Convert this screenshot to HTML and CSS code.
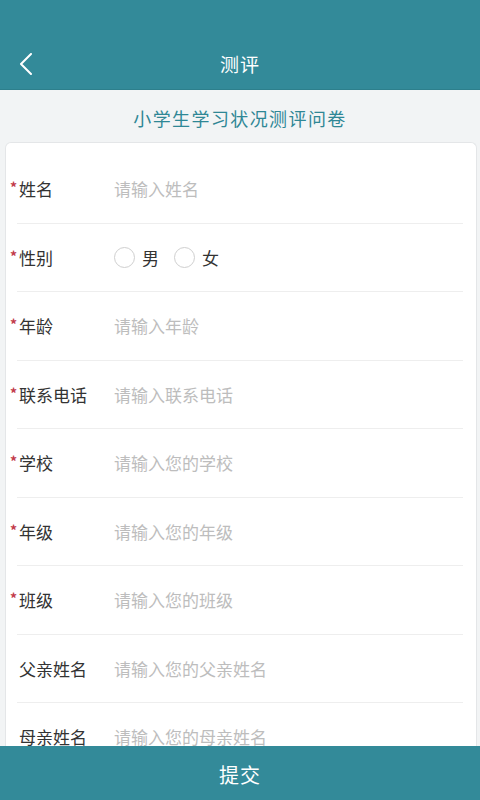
FILE: index.html
```html
<!DOCTYPE html>
<html lang="zh-CN">
<head>
<meta charset="utf-8">
<title>测评</title>
<link rel="stylesheet" href="styles.css">
</head>
<body>
<div class="app">
  <header class="header">
    <div class="bar">
      <span class="back">
        <svg width="14" height="22" viewBox="0 0 14 22"><path d="M12 1 L2 11 L12 21" fill="none" stroke="#fff" stroke-width="2" stroke-linecap="round" stroke-linejoin="round"/></svg>
      </span>
      <h1 class="title">测评</h1>
    </div>
  </header>
  <div class="subtitle">小学生学习状况测评问卷</div>
  <main class="main">
    <div class="card">
      <div class="row"><label class="label"><span class="star">*</span>姓名</label><input class="input" placeholder="请输入姓名"></div>
      <div class="row"><label class="label"><span class="star">*</span>性别</label>
        <div class="radios">
          <span class="radio"><span class="circle"></span>男</span>
          <span class="radio"><span class="circle"></span>女</span>
        </div>
      </div>
      <div class="row"><label class="label"><span class="star">*</span>年龄</label><input class="input" placeholder="请输入年龄"></div>
      <div class="row"><label class="label"><span class="star">*</span>联系电话</label><input class="input" placeholder="请输入联系电话"></div>
      <div class="row"><label class="label"><span class="star">*</span>学校</label><input class="input" placeholder="请输入您的学校"></div>
      <div class="row"><label class="label"><span class="star">*</span>年级</label><input class="input" placeholder="请输入您的年级"></div>
      <div class="row"><label class="label"><span class="star">*</span>班级</label><input class="input" placeholder="请输入您的班级"></div>
      <div class="row"><label class="label">父亲姓名</label><input class="input" placeholder="请输入您的父亲姓名"></div>
      <div class="row"><label class="label">母亲姓名</label><input class="input" placeholder="请输入您的母亲姓名"></div>
    </div>
  </main>
  <footer class="submit">提交</footer>
</div>
</body>
</html>
```
FILE: styles.css
```css
* { box-sizing: border-box; }
html, body { margin: 0; padding: 0; }
body {
  width: 480px;
  height: 800px;
  overflow: hidden;
  font-family: "Noto Sans CJK SC", "Noto Sans", sans-serif;
  background: #f2f4f5;
}
.app {
  display: flex;
  flex-direction: column;
  height: 800px;
}
.header {
  flex: none;
  height: 90px;
  padding-top: 37px;
  background: #338a99;
  border-bottom: 1px solid #2d7f8c;
}
.bar {
  height: 52px;
  display: flex;
  align-items: center;
  justify-content: center;
  position: relative;
}
.back {
  position: absolute;
  left: 19px;
  top: 16px;
  display: flex;
}
.title {
  margin: 0;
  font-size: 19px;
  font-weight: 400;
  color: #fff;
  letter-spacing: 1px;
}
.subtitle {
  flex: none;
  height: 52px;
  padding-top: 4px;
  display: flex;
  align-items: center;
  justify-content: center;
  font-size: 18px;
  letter-spacing: 1.4px;
  color: #2f8795;
}
.main {
  flex: 1;
  overflow: hidden;
  padding: 0 3px 0 5px;
}
.card {
  background: #fff;
  border: 1px solid #e4e6e8;
  border-bottom: none;
  border-radius: 6px 6px 0 0;
  padding-top: 12px;
}
.row {
  height: 68.5px;
  margin: 0 13px 0 11px;
  border-bottom: 1px solid #eeeeee;
  display: flex;
  align-items: center;
}
.label {
  flex: none;
  width: 97px;
  padding-left: 2px;
  font-size: 17px;
  color: #333;
}
.star {
  display: inline-block;
  width: 9px;
  margin-left: -9px;
  font-size: 14px;
  font-weight: 700;
  color: #c23a4b;
  vertical-align: 3px;
}
.input {
  flex: 1;
  min-width: 0;
  border: none;
  outline: none;
  padding: 0;
  font-family: inherit;
  font-size: 17px;
  color: #333;
  background: transparent;
}
.input::placeholder { color: #bdbdbd; }
.radios {
  display: flex;
  gap: 15px;
}
.radio {
  display: flex;
  align-items: center;
  gap: 7px;
  font-size: 17px;
  color: #333;
}
.circle {
  width: 21px;
  height: 21px;
  border: 1.5px solid #cfcfcf;
  border-radius: 50%;
}
.submit {
  flex: none;
  height: 54px;
  padding-top: 2px;
  background: #338a99;
  color: #fff;
  font-size: 20px;
  letter-spacing: 1px;
  display: flex;
  align-items: center;
  justify-content: center;
}
```
